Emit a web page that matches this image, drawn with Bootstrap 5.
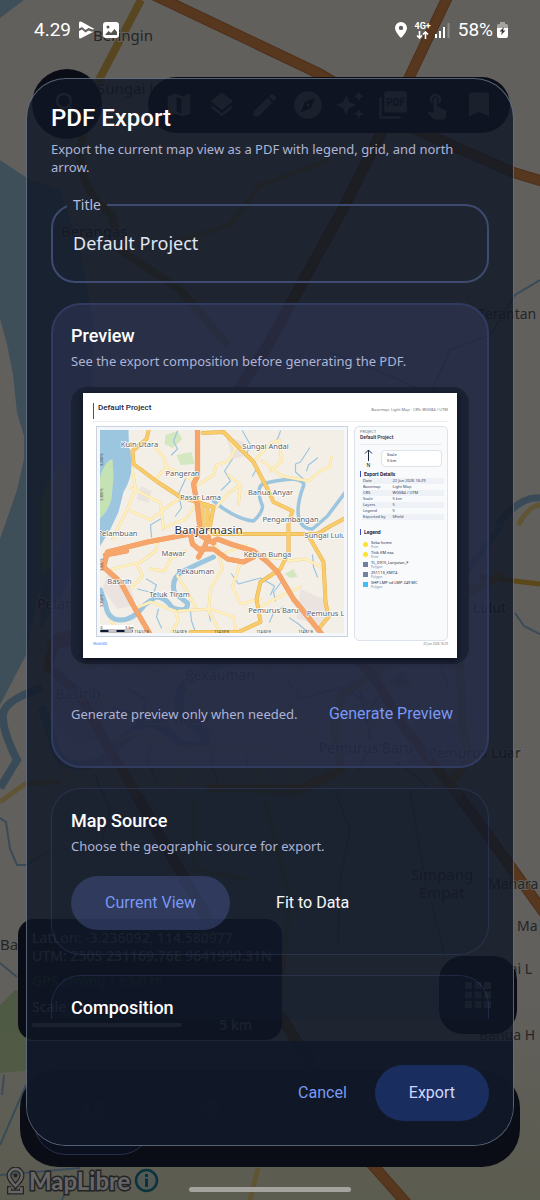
<!DOCTYPE html>
<html lang="en">
<head>
<meta charset="utf-8">
<meta name="viewport" content="width=device-width, initial-scale=1">
<title>PDF Export</title>
<link href="https://cdn.jsdelivr.net/npm/bootstrap@5.3.0/dist/css/bootstrap.min.css" rel="stylesheet">
<style>
  :root { --ui: Roboto, "Noto Sans", sans-serif; --copy: "Noto Sans", "Open Sans", sans-serif; }
  body { font-family: var(--copy); background: #625f58; color: #e6e9f5; }
  .stage { display: grid; grid-template: minmax(0, 1fr) / minmax(0, 1fr); height: 100vh; min-height: 900px; overflow: hidden; }
  .stage > * { grid-area: 1 / 1; min-width: 0; min-height: 0; }
  .worldmap { width: 100%; height: 100%; display: block; }
  .scrim { background: rgba(0, 0, 0, .6); }

  /* map screen behind the dialog */
  .mapui { padding: 69px 20px 6px 18px; color: #c4c9d2; }
  .dark-glass { background: #1a2239; }
  .search-dot { width: 70px; height: 70px; margin-left: 14px; }
  .toolstrip { height: 56px; border-radius: 28px; width: 362px; margin-right: 10px; padding: 0 16px; }
  .toolstrip svg, .search-dot svg, .navtabs svg { width: 30px; height: 30px; fill: #b4b9c2; }
  .coords { width: 264px; height: 121px; border-radius: 16px; padding: 10px 14px; font-size: 14px; line-height: 18px; font-weight: 500; }
  .gps { color: #2f8048; padding-top: 7px; }
  .scaleline { width: 150px; height: 4px; border-radius: 2px; background: #c4c9d2; }
  .gridbtn { width: 78px; height: 78px; border-radius: 24px; margin: 0 3px 6px 0; }
  .navtabs { height: 97px; border-radius: 38px; margin: 30px 0 0 2px; padding: 12px 14px; font-size: 12px; }
  .navtabs .picked { border: 1px solid #6574b8; border-radius: 32px; background: #1d294b; }
  .maplogo { font: 700 24px/26px Lato, sans-serif; color: #fff; -webkit-text-stroke: 3px #5a5a5a; paint-order: stroke fill; }
  .credit { height: 27px; margin: 0 0 0 -12px; }

  /* system bars */
  .status { height: 60px; padding: 0 32px 0 34px; font: 400 19px/24px var(--ui); color: #fff; }
  .netmark { font: 700 9px/9px var(--ui); }
  .homebar { width: 30%; height: 5px; border-radius: 3px; background: #a4a39e; margin: auto auto 8px; }

  /* dialog */
  .dialog-pad { padding: 78px 26px 54px; }
  .sheet { border: 1px solid rgba(190, 205, 230, .42); border-radius: 40px; background: rgba(15, 22, 37, .8); overflow: hidden; }
  .sheet-body { padding: 25px 24px 0; min-height: 0; overflow: hidden; margin-bottom: 22px; }
  .sheet-title { font: 500 24px/28px var(--ui); color: #fff; }
  .hint { font-size: 13px; line-height: 18px; color: #aeb4d6; margin: 0; }
  .field { border: 2px solid #3e4a70; border-radius: 24px; height: 88px; padding: 0 20px; margin-top: 19px; }
  .field legend { float: none; width: auto; margin: 0 0 0 -6px; padding: 0 6px; font-size: 14px; line-height: 20px; color: #b6bddb; }
  .field input { background: none; border: 0; outline: 0; width: 100%; padding: 0; font-size: 18px; line-height: 24px; color: #e0e5f4; margin-top: 16px; }
  .panel { border: 1px solid rgba(66, 78, 130, .35); border-radius: 30px; padding: 20px 19px; margin-top: 20px; background: rgba(22, 28, 48, .2); }
  .panel.lit { border: 2px solid #313b60; background: rgba(52, 58, 96, .46); padding: 19px 18px 32px; }
  .panel h2 { font: 500 18px/24px var(--ui); color: #fff; margin: 0; }
  .panel h2 + .hint { margin-top: 4px; }
  .tbtn { border: 0; border-radius: 28px; background: none; font: 400 16px/24px var(--ui); color: #7b98f4; }
  .segbtn { height: 54px; padding: 0 34px; }
  .segbtn.on { background: rgba(70, 84, 140, .48); }
  .segrow { gap: 12px; padding-top: 5px; }
  .footbar { background: rgba(17, 24, 40, .9); padding: 24px; flex: none; }
  .btn-export { background: #1a2d5f; color: #ced8ff; height: 56px; padding: 0 34px; }

  /* PDF page preview */
  .tray { background: #1b2234; border-radius: 16px; padding: 6px 12px; margin: 17px 0 22px; }
  .page { background: #fff; color: #1c2740; padding: 10px 9px 8px 10px; height: 265px; font: 4px/6px var(--copy); box-shadow: 0 2px 6px #0a0e18; }
  .accent { border-left: 1px solid #3b46c0; }
  .pg-title { font: 500 8px/9px var(--ui); padding: 0 0 6px 4px; }
  .pg-head { border-bottom: 1px solid #edf0f5; padding-bottom: 2px; height: 19px; }
  .pg-map { border: 1px solid #c9d1de; padding: 3px; background: #f4f7fb; width: 252px; height: 211px; margin-left: 3px; }
  .pg-map svg { display: block; width: 100%; height: 100%; }
  .pg-side { border: 1px solid #dde3ec; border-radius: 5px; background: #f8fafc; height: 215px; padding: 2px 5px; margin-left: 6px; }
  .pg-name { font: 500 5px/5px var(--ui); border-bottom: 1px solid #e7ebf2; padding-bottom: 4px; }
  .pg-scale { border: 1px solid #dde3ec; border-radius: 4px; background: #fff; height: 17px; padding: 1px 5px; }
  .pg-h { font: 700 5px/6px var(--ui); padding-left: 3px; }
  .pg-tab { width: 100%; margin: 1px 0 9px 2px; border-collapse: collapse; color: #33405c; }
  .pg-tab tr:nth-child(odd) { background: #eef2f7; }
  .pg-tab th { font-weight: 400; width: 36%; }
  .pg-tab td, .pg-tab th { padding: 0 1px; line-height: 6px; }
  .lg { display: flex; gap: 3px; height: 10px; padding-left: 3px; line-height: 5px; align-items: center; }
  .lg i { width: 5px; height: 5px; flex: none; }
  .lg small { display: block; font-size: 3px; line-height: 4px; color: #7a869e; }
  .pg-foot { font-size: 3px; line-height: 6px; }
</style>
</head>
<body>
<main class="stage">
  <svg class="worldmap" viewBox="0 0 540 1200" preserveAspectRatio="xMidYMid slice" aria-hidden="true">
    <defs>
      <linearGradient id="haze" x1="0" y1="0" x2="0" y2="1"><stop offset="0" stop-color="#dfe3bd" stop-opacity="0"/><stop offset="1" stop-color="#dfe3bd" stop-opacity=".75"/></linearGradient>
      <g id="city" fill="none" stroke-linejoin="round" stroke-linecap="round">
        <g fill="#d3e8c0" stroke="none">
          <path d="M165 436l12-4 5 8-10 9-8-4zM176 456l15-3 3 12-14 1zM284 575l9-5 4 8-7 1z"/>
        </g>
        <g fill="#eae3e0" stroke="none"><path d="M107 575l22 9 6 22-18 4-15-20zM225 437l18 6 2 14-12 3zM300 590l28 12-4 24-28-6zM140 487l11 5-3 12-12-4z"/></g>
        <path fill="#9cc5e0" stroke="none" d="M99 431H128Q128 447 130 453L131 468Q131 480 123 493L118 513 110 530 99 548Z"/>
        <path fill="#c5e2b4" stroke="none" d="M112 460Q104 462 99 480V520Q108 512 111 500L113 478Z"/>
        <g stroke="#9cc5e0">
          <path stroke-width="5" d="M100 591L105 605Q107 621 120 621T144 606L155 598Q165 598 172 609 188 614 187 604L174 594Q170 580 181 573 195 566 213 558"/>
          <path stroke-width="3.5" d="M213 502L222 509Q240 521 253 522 262 514 262 507 255 490 262 485 275 481 293 480 305 482 303 487 296 505 298 518 301 530 312 530L327 517 345 493"/>
          <path stroke-width="1.2" d="M177 432l-4 10 4 8-6 6M242 432l8 14-4 9 10 15-4 7M232 460l-8 12 6 10-9 9M185 480l-7 15 3 14-6 8M280 432l-3 8-7 6M309 449l-9 14-5 2v8l8 7M317 459l-9 7-2 6M160 520l-10 6 1 12M158 610l-2 8 5 11M190 612l1 10 4 11M208 612l2 10M231 575l7 10 22-6 14 8-4 9M146 580l10 6-3 8-16-4M312 556l1 12 4 10M283 608l-10 6-4 9M289 619l9 6 8 7M280 584l-7 9 2 9"/>
        </g>
        <g stroke="#f0d9a0" stroke-width="2.8"><use href="#lanes"/></g>
        <g stroke="#fff0bd" stroke-width="2"><path id="lanes" d="M132 470L135 490 126 512 112 540M131 489L160 504 163 530M150 443L163 458 166 468 155 480M181 498L164 510 150 521 130 512M166 468L186 478 195 482M197 486L213 476 216 466 228 462 235 450 228 440M253 463L270 444 279 441 281 462 270 472M262 462L281 477 308 482 320 472 329 468 331 458M200 500L185 520 165 528M240 486L228 494 214 510M228 476L240 486 238 505M112 570L140 563 155 552 158 540M136 565L142 577 130 590M133 610L150 603 175 612 178 622 170 634M178 612L210 610 233 618 236 634M150 570L164 572 170 560 185 552M177 577L185 590 195 608M215 545L222 570 210 590 208 612 220 634M240 563L232 588 240 605 260 600M288 560L262 558M325 570L305 560 288 562M260 608L282 596 300 588M110 622L122 634M222 555L245 546"/></g>
        <g stroke="#e6b04e" stroke-width="4"><use href="#mains"/></g>
        <g stroke="#f8cb6b" stroke-width="3.2"><path id="mains" d="M148 432L146 440 132 452 133 465 157 483 180 498 213 508 209 530M202 434L223 433 253 463 267 490 273 503 292 512 288 525V553L280 570 260 583 256 600 260 623 238 633H190M213 535H317L330 527 345 519M307 535L323 563 325 603 328 618 318 630M202 505V530M207 508V530"/></g>
        <g stroke="#ee9a62" stroke-width="5.2"><use href="#trunk"/></g>
        <g stroke="#f6a66b" stroke-width="4.4"><path id="trunk" d="M197 431V477L193 485 197 507 200 535M200 533L147 543 107 553 103 568 120 583 133 607 150 636M126 552L105 556M190 536L192 545 198 550 213 550 227 560 243 563 253 558M213 542L217 540 230 545 253 552 267 563 277 573 293 600 322 636M198 558L204 548 208 538M201 537L213 544"/></g>
      </g>
      <g id="names" font-family="Noto Sans, sans-serif" font-size="7.5" fill="#5a5c66" stroke="#fff" stroke-width="1.4" paint-order="stroke" stroke-linejoin="round" text-anchor="middle">
        <text x="139" y="448">Kuin Utara</text><text x="182" y="477">Pangeran</text><text x="200" y="501">Pasar Lama</text><text x="265" y="450">Sungai Andai</text><text x="270" y="496">Banua Anyar</text><text x="290" y="523">Pengambangan</text><text x="117" y="537">Pelambuan</text><text x="173" y="557">Mawar</text><text x="195" y="575">Pekauman</text><text x="119" y="585">Basirih</text><text x="169" y="598">Teluk Tiram</text><text x="267" y="558">Kebun Bunga</text><text x="326" y="539">Sungai Lulut</text><text x="273" y="614">Pemurus Baru</text><text x="331" y="617">Pemurus Luar</text>
        <text x="208" y="535" font-size="11.5" fill="#2f3138">Banjarmasin</text>
      </g>
    </defs>
    <rect width="540" height="1200" fill="#f4efe6"/>
    <g fill="#9cc5e0">
      <path d="M0 0H24L0 18ZM0 160L27 178 60 190 80 250 95 330 90 420H41V580L26 655 0 705V539L17 490 24 459 24 436 17 413 13 375 7 344 0 319Z"/>
    </g>
    <path fill="#c3e0a8" d="M0 1005L15 990 25 993 34 1070 0 1073Z"/>
    <rect y="1000" width="540" height="200" fill="url(#haze)"/>
    <g fill="none" stroke="#8ebcdb" stroke-width="2">
      <path stroke-width="8" d="M42 688Q4 700 3 715T17 760L0 788"/>
      <path d="M0 818L6 822 10 849 17 865 27 865 50 850M0 963L17 977M0 1175L80 1168M4 1075L2 1095M26 1085L0 1145M540 280L515 295 490 335 450 350 430 395 400 380 330 352M515 613L524 626 540 634M95 775L110 810 100 850M335 790L350 830 340 880 338 945M410 790L425 880 445 955M62 1200L70 1180M360 690L370 740"/>
      <path stroke-width="7" d="M497 525Q520 496 540 498"/>
    </g>
    <g fill="none" stroke-linejoin="round">
      <path stroke="#d9b04e" stroke-width="8" d="M141 0L100 78 80 145Q78 190 112 215L120 250 180 290 228 345"/>
      <path stroke="#eed484" stroke-width="5" d="M0 802L25 784 60 782M258 1168L250 1200M518 525Q530 505 540 505M150 250L230 225 260 185 330 160M195 800V870L250 880M205 785L295 795 335 775M265 800L290 900 280 1000"/>
      <path stroke="#e5b23c" stroke-width="5" d="M480 577L540 584"/>
      <path stroke="#bd7440" stroke-width="11" d="M152-6L320 74 405 125 515 173 545 182M448-4L408 80 345 205 268 345 224 411M136 794L260 1010M458 794L545 914M370 1162L408 1205M280 1015L340 1110"/>
      <path stroke="#db8a4e" stroke-width="9" d="M152-6L320 74 405 125 515 173 545 182M448-4L408 80 345 205 268 345 224 411M136 794L260 1010M458 794L545 914M370 1162L408 1205M280 1015L340 1110"/>
    </g>
    <g transform="translate(-144.5 -395.3) scale(1.87)"><use href="#city"/><use href="#names"/></g>
    <g font-family="Noto Sans, sans-serif" font-size="15" fill="#5c5e66" stroke="#f4efe6" stroke-width="2" paint-order="stroke" stroke-linejoin="round">
      <text x="93" y="41">Beringin</text><text x="97" y="94">Sungai Lulut</text><text x="61" y="237">Berangas</text><text x="478" y="319" font-size="14">Terantan</text><text x="411" y="880">Simpang</text><text x="419" y="898">Empat</text><text x="488" y="889" font-size="14">Mahara</text><text x="517" y="931" font-size="14">Ma</text><text x="476" y="974" font-size="14">Sungai L</text><text x="479" y="1040" font-size="14">Banua H</text><text x="0" y="950">Bar</text>
    </g>
  </svg>

  <div class="mapui d-flex flex-column">
    <div class="d-flex justify-content-between align-items-start">
      <div class="search-dot dark-glass rounded-circle d-flex align-items-center justify-content-center"><svg viewBox="0 0 24 24"><path d="M15.5 14h-.8l-.3-.3A6.5 6.5 0 1 0 13.700 14.400l.3.300v.8l5 5 1.500-1.500zm-6 0a4.500 4.500 0 1 1 0-9 4.500 4.500 0 0 1 0 9z"/></svg></div>
      <div class="toolstrip dark-glass d-flex align-items-center justify-content-between mt-2">
        <svg viewBox="0 0 24 24"><path d="M15 5.100L9 3 3.300 4.900a.5.500 0 0 0-.3.500v15.100c0 .3.200.5.600.5L9 18.900 15 21l5.700-1.900a.5.500 0 0 0 .3-.5V3.500c0-.3-.2-.5-.6-.5zM14 18.500l-4-1.400V5.500l4 1.400z"/></svg>
        <svg viewBox="0 0 24 24"><path d="M12 2L3 9l9 7 9-7zM12 18.500l-7.400-5.700L3 14l9 7 9-7-1.600-1.200z"/></svg>
        <svg viewBox="0 0 24 24"><path d="M3 17.200V21h3.800L17.800 9.900l-3.700-3.700zM20.700 7a1 1 0 0 0 0-1.400l-2.300-2.300a1 1 0 0 0-1.400 0l-1.900 1.800 3.800 3.800z"/></svg>
        <svg viewBox="0 0 24 24"><path d="M12 1a11 11 0 1 0 0 22 11 11 0 0 0 0-22zm2.400 13.400L6 18l3.600-8.400L18 6zM12 10.800a1.200 1.200 0 1 0 0 2.400 1.200 1.200 0 0 0 0-2.400z" fill-rule="evenodd"/></svg>
        <svg viewBox="0 0 24 24"><path d="M9 4l2.400 5.600L17 12l-5.600 2.400L9 20l-2.400-5.600L1 12l5.600-2.400zM19 1l1.200 2.800L23 5l-2.800 1.200L19 9l-1.200-2.800L15 5l2.800-1.200zM19 15l1.200 2.800L23 19l-2.800 1.200L19 23l-1.200-2.800L15 19l2.800-1.200z"/></svg>
        <svg viewBox="0 0 24 24"><path d="M3 6H1v15a2 2 0 0 0 2 2h15v-2H3z"/><path d="M7 1h14a2 2 0 0 1 2 2v13a2 2 0 0 1-2 2H7a2 2 0 0 1-2-2V3a2 2 0 0 1 2-2z"/><text x="14" y="12.500" text-anchor="middle" font-family="Roboto, sans-serif" font-size="8" font-weight="700" fill="#1a2239">PDF</text></svg>
        <svg viewBox="0 0 24 24"><path d="M9 11.200V7.500a2.500 2.500 0 0 1 5 0v3.700a4.500 4.500 0 1 0-5 0zm9.800 4.700l-4.500-2.300-.5-.1H13v-6a1.500 1.500 0 0 0-3 0v10.700l-3.900-.8-.8.800 5 5c.3.300.6.400 1 .4h6.800c.8 0 1.300-.6 1.400-1.300l.8-5.300c0-.5-.5-.9-1-1.100z"/></svg>
        <svg viewBox="0 0 24 24"><path d="M6 2h12a2 2 0 0 1 2 2v17l-8-3.500L4 21V4a2 2 0 0 1 2-2z"/></svg>
      </div>
    </div>
    <div class="d-flex justify-content-between align-items-end mt-auto">
      <div class="coords dark-glass">
        <div class="text-nowrap">LatLon: -3.236092, 114.580977</div>
        <div class="text-nowrap">UTM: Z50S 231169.76E 9641990.31N</div>
        <div class="gps">GPS strong • ±3,0 m</div>
        <div class="pt-2">Scale</div>
        <div class="d-flex align-items-center justify-content-between pe-3"><span class="scaleline"></span><span>5 km</span></div>
      </div>
      <div class="gridbtn dark-glass d-flex align-items-center justify-content-center"><svg width="26" height="26" viewBox="0 0 26 26" fill="#b4b9c2"><path d="M0 0h7v7H0zM9.500 0h7v7h-7zM19 0h7v7h-7zM0 9.500h7v7H0zM9.500 9.500h7v7h-7zM19 9.500h7v7h-7zM0 19h7v7H0zM9.500 19h7v7h-7zM19 19h7v7h-7z"/></svg></div>
    </div>
    <div class="navtabs dark-glass row g-0 text-center">
      <div class="col-3 picked d-flex flex-column align-items-center justify-content-center"><svg viewBox="0 0 24 24"><path d="M15 5L9 3 3 5v16l6-2 6 2 6-2V3zM14 18.500l-4-1.400V5.500l4 1.400z"/></svg>Map</div>
      <div class="col-3 d-flex flex-column align-items-center justify-content-center"><svg viewBox="0 0 24 24"><path d="M12 2L3 9l9 7 9-7zM12 18.500l-7.400-5.700L3 14l9 7 9-7-1.600-1.200z"/></svg>Layers</div>
    </div>
    <div class="credit d-flex align-items-center">
      <svg width="19" height="28" viewBox="0 0 19 28" fill="none" stroke="#fff" stroke-width="2.500"><g stroke="#5a5a5a" stroke-width="5"><path d="M9.500 19C5 14 3 12 3 8.500a6.500 6.500 0 0 1 13 0C16 12 14 14 9.500 19zM5 21.500H3.500V25h12v-3.500H14"/></g><path d="M9.500 19C5 14 3 12 3 8.500a6.500 6.500 0 0 1 13 0C16 12 14 14 9.500 19zM5 21.500H3.500V25h12v-3.500H14"/><circle cx="9.500" cy="8.500" r="2" fill="#5a5a5a" stroke="none"/></svg>
      <span class="maplogo ms-1">MapLibre</span>
      <svg class="ms-1" width="25" height="25" viewBox="0 0 25 25"><circle cx="12.500" cy="12.500" r="10.500" fill="#cfe0d8" stroke="#1c7f9c" stroke-width="2.500"/><path d="M11 6h3v3h-3zM11 10.500h3V19h-3z" fill="#1c7f9c"/></svg>
    </div>
  </div>

  <div class="scrim"></div>

  <div class="d-flex flex-column">
    <header class="status d-flex align-items-center">
      <span>4.29</span>
      <svg class="ms-2" width="16" height="18" viewBox="0 0 16 18" fill="#fff"><path d="M1.500.5Q0 0 0 2v5.500l3-1.500 3.500 3 3-2 4 1.500 2-.5L3 1zM0 10v6q0 2 1.500 1.500L15 10.500l-2 .3-3.500-1.300-3 2L3 8.500z"/></svg>
      <svg class="ms-2" width="16" height="16" viewBox="0 0 16 16"><rect width="16" height="16" rx="3" fill="#fff"/><circle cx="5" cy="5" r="1.500" fill="#55544f"/><path d="M2 13l3.500-4 2.500 2 3.500-4L14 10v3z" fill="#55544f"/></svg>
      <svg class="ms-auto" width="12" height="16" viewBox="0 0 12 16"><path fill="#fff" fill-rule="evenodd" d="M6 0a6 6 0 0 0-6 6c0 4 6 10 6 10s6-6 6-10a6 6 0 0 0-6-6zm0 3.700a2.200 2.200 0 1 1 0 4.400 2.200 2.200 0 0 1 0-4.400z"/></svg>
      <span class="netmark ms-2 text-center">4G+<svg class="d-block mx-auto" width="13" height="8" viewBox="0 0 13 8" fill="none" stroke="#fff" stroke-width="1.600"><path d="M3.500 0v7M1 4.500L3.500 7 6 4.500M9.500 8V1M7 3.500L9.500 1 12 3.500"/></svg></span>
      <svg class="ms-1" width="15" height="15" viewBox="0 0 15 15"><path fill="#fff" d="M0 11h2v4H0zM4 8h2v7H4zM8 4h2v11H8z"/><path fill="#8b8a86" d="M12.500 0h2v15h-2z"/></svg>
      <span class="ms-2">58%</span>
      <svg class="ms-1" width="11" height="16" viewBox="0 0 11 16"><path fill="#a5a4a0" d="M3 0h5v2h1.500Q11 2 11 3.500V7H0V3.500Q0 2 1.500 2H3z"/><path fill="#fff" d="M0 6h11v8q0 2-2 2H2q-2 0-2-2z"/><path fill="#333" d="M7 5L2.500 9.500H5L4 13l4.500-4.500H6z"/></svg>
    </header>
    <div class="homebar"></div>
  </div>

  <div class="dialog-pad d-flex flex-column">
    <form class="sheet d-flex flex-column flex-grow-1" role="dialog" aria-labelledby="dlgTitle" style="min-height:0">
      <div class="sheet-body flex-grow-1">
        <h1 id="dlgTitle" class="sheet-title mb-2">PDF Export</h1>
        <p class="hint">Export the current map view as a PDF with legend, grid, and north arrow.</p>
        <fieldset class="field">
          <legend><label for="docTitle">Title</label></legend>
          <input id="docTitle" type="text" value="Default Project">
        </fieldset>

        <section class="panel lit">
          <h2>Preview</h2>
          <p class="hint">See the export composition before generating the PDF.</p>
          <div class="tray">
            <div class="page">
              <div class="pg-head d-flex justify-content-between"><div class="accent pg-title">Default Project</div><div class="pt-1 text-secondary">Basemap: Light Map · CRS: WGS84 / UTM</div></div>
              <div class="d-flex mt-1">
                <div class="pg-map flex-shrink-0">
                  <svg viewBox="99.500 431 244 203" preserveAspectRatio="xMidYMid slice">
                    <rect x="90" y="420" width="270" height="230" fill="#f4efe6"/><use href="#city"/><use href="#names"/>
                    <g font-family="Noto Sans, sans-serif" font-size="3.500" fill="#333"><text x="134" y="633.500">114.57°E</text><text x="172" y="633.500">114.58°E</text><text x="214" y="633.500">114.59°E</text><text x="256" y="633.500">114.60°E</text><text x="298" y="633.500">114.61°E</text><text transform="translate(102.500 467) rotate(-90)">3.290°S</text><text transform="translate(102.500 502) rotate(-90)">3.305°S</text><text transform="translate(102.500 572) rotate(-90)">3.335°S</text><text transform="translate(102.500 608) rotate(-90)">3.350°S</text></g>
                    <path fill="#fff" d="M99 626h34v7H99z"/><path stroke="#111a33" stroke-width="2" d="M100 632h8M116 632h8"/><path fill="none" stroke="#111a33" stroke-width=".5" d="M100 631h32v2h-32z"/><g font-family="Noto Sans, sans-serif" font-size="3.500"><text x="100" y="630">0</text><text x="125" y="630">5 km</text></g>
                  </svg>
                </div>
                <aside class="pg-side flex-grow-1">
                  <div class="text-secondary">PROJECT</div>
                  <div class="pg-name">Default Project</div>
                  <div class="d-flex align-items-center py-1">
                    <svg class="mx-1" width="9" height="18" viewBox="0 0 9 18"><path fill="none" stroke="#1c2740" d="M4.500 12V1M1 4.500L4.500 1 8 4.500"/><text x="4.500" y="18" text-anchor="middle" font-size="5">N</text></svg>
                    <div class="pg-scale flex-grow-1 ms-1"><div>Scale</div><div>5 km</div></div>
                  </div>
                  <div class="accent pg-h">Export Details</div>
                  <table class="pg-tab">
                    <tr><th>Date</th><td>22 Jun 2026 16:29</td></tr><tr><th>Basemap</th><td>Light Map</td></tr><tr><th>CRS</th><td>WGS84 / UTM</td></tr><tr><th>Scale</th><td>5 km</td></tr><tr><th>Layers</th><td>5</td></tr><tr><th>Legend</th><td>5</td></tr><tr><th>Exported by</th><td>SField</td></tr>
                  </table>
                  <div class="accent pg-h mb-1">Legend</div>
                  <div class="lg"><i class="rounded-circle" style="background:#fde22f"></i><div>Seka home<small>Point</small></div></div>
                  <div class="lg"><i class="rounded-circle" style="background:#fde22f"></i><div>Titik KM exa<small>Point</small></div></div>
                  <div class="lg"><i style="background:#71809f"></i><div>TL_0915_Lanjutan_F<small>Polygon</small></div></div>
                  <div class="lg"><i style="background:#71809f"></i><div>251113_KM74<small>Polygon</small></div></div>
                  <div class="lg"><i style="background:#43bdf5"></i><div>SHP LMP sd LMP 249 MC<small>Polygon</small></div></div>
                </aside>
              </div>
              <div class="pg-foot d-flex justify-content-between"><span class="text-primary">SField GIS</span><span class="text-secondary">22 Jun 2026 16:29</span></div>
            </div>
          </div>
          <div class="d-flex align-items-center justify-content-between pt-2">
            <p class="hint text-nowrap">Generate preview only when needed.</p>
            <button type="button" class="tbtn py-2 px-3 text-nowrap">Generate Preview</button>
          </div>
        </section>

        <section class="panel">
          <h2>Map Source</h2>
          <p class="hint">Choose the geographic source for export.</p>
          <div class="segrow d-flex mt-3 pb-1">
            <button type="button" class="tbtn segbtn on">Current View</button>
            <button type="button" class="tbtn segbtn text-light">Fit to Data</button>
          </div>
        </section>

        <section class="panel">
          <h2>Composition</h2>
          <p class="hint">Choose the page layout.</p>
        </section>
      </div>
      <div class="footbar d-flex justify-content-end align-items-center">
        <button type="button" class="tbtn px-4 py-2">Cancel</button>
        <button type="submit" class="tbtn btn-export ms-1">Export</button>
      </div>
    </form>
  </div>
</main>
<script src="https://cdn.jsdelivr.net/npm/bootstrap@5.3.0/dist/js/bootstrap.bundle.min.js"></script>
</body>
</html>
